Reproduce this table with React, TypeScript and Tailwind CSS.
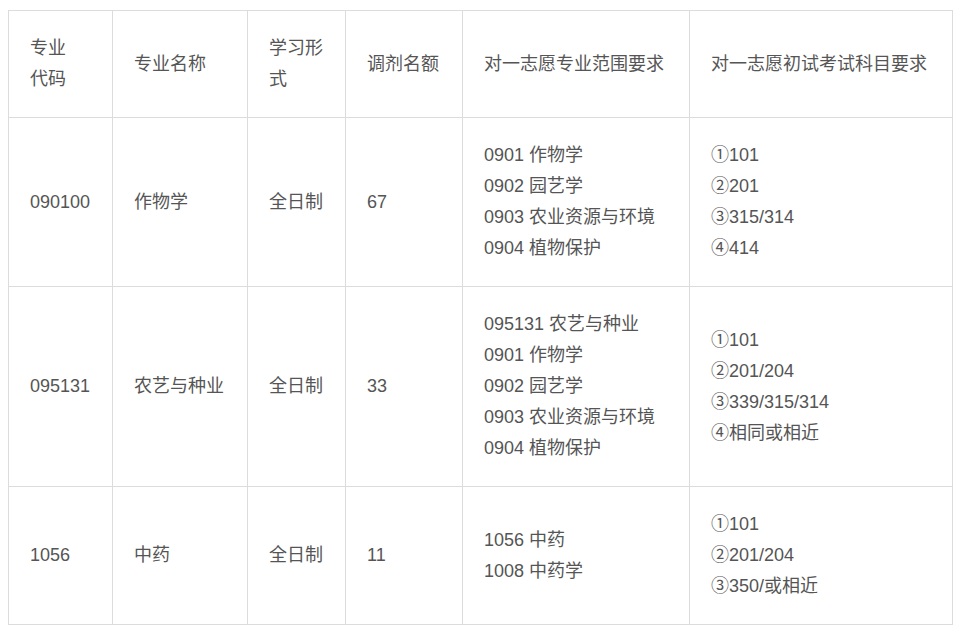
const rows = [
  {
    code: "090100",
    name: "作物学",
    form: "全日制",
    quota: "67",
    range: ["0901 作物学", "0902 园艺学", "0903 农业资源与环境", "0904 植物保护"],
    exams: ["①101", "②201", "③315/314", "④414"],
  },
  {
    code: "095131",
    name: "农艺与种业",
    form: "全日制",
    quota: "33",
    range: ["095131 农艺与种业", "0901 作物学", "0902 园艺学", "0903 农业资源与环境", "0904 植物保护"],
    exams: ["①101", "②201/204", "③339/315/314", "④相同或相近"],
  },
  {
    code: "1056",
    name: "中药",
    form: "全日制",
    quota: "11",
    range: ["1056 中药", "1008 中药学"],
    exams: ["①101", "②201/204", "③350/或相近"],
  },
];

const widths = ["w-[104px]", "w-[135px]", "w-[98px]", "w-[117px]", "w-[227px]", "w-[263px]"];

const cell = "border border-[#dcdcdc] pl-[21px] pr-[6px] py-[22px] align-middle text-left font-normal";

export default function App() {
  return (
    <div
      className="min-h-[634px] bg-white pl-2 pt-[10px] text-[18px] leading-[31px] text-[#555]"
      style={{ fontFamily: '"Liberation Sans", "Noto Sans CJK SC", sans-serif' }}
    >
      <table className="w-[945px] table-fixed border-collapse">
        <colgroup>
          {widths.map((w) => (
            <col key={w} className={w} />
          ))}
        </colgroup>
        <thead>
          <tr>
            <th className={cell}>
              专业
              <br />
              代码
            </th>
            <th className={cell}>专业名称</th>
            <th className={cell}>
              学习形
              <br />
              式
            </th>
            <th className={cell}>调剂名额</th>
            <th className={cell}>对一志愿专业范围要求</th>
            <th className={cell}>对一志愿初试考试科目要求</th>
          </tr>
        </thead>
        <tbody>
          {rows.map((r) => (
            <tr key={r.code}>
              <td className={cell}>{r.code}</td>
              <td className={cell}>{r.name}</td>
              <td className={cell}>{r.form}</td>
              <td className={cell}>{r.quota}</td>
              <td className={cell}>
                {r.range.map((t) => (
                  <div key={t}>{t}</div>
                ))}
              </td>
              <td className={cell}>
                {r.exams.map((t) => (
                  <div key={t}>{t}</div>
                ))}
              </td>
            </tr>
          ))}
        </tbody>
      </table>
    </div>
  );
}
